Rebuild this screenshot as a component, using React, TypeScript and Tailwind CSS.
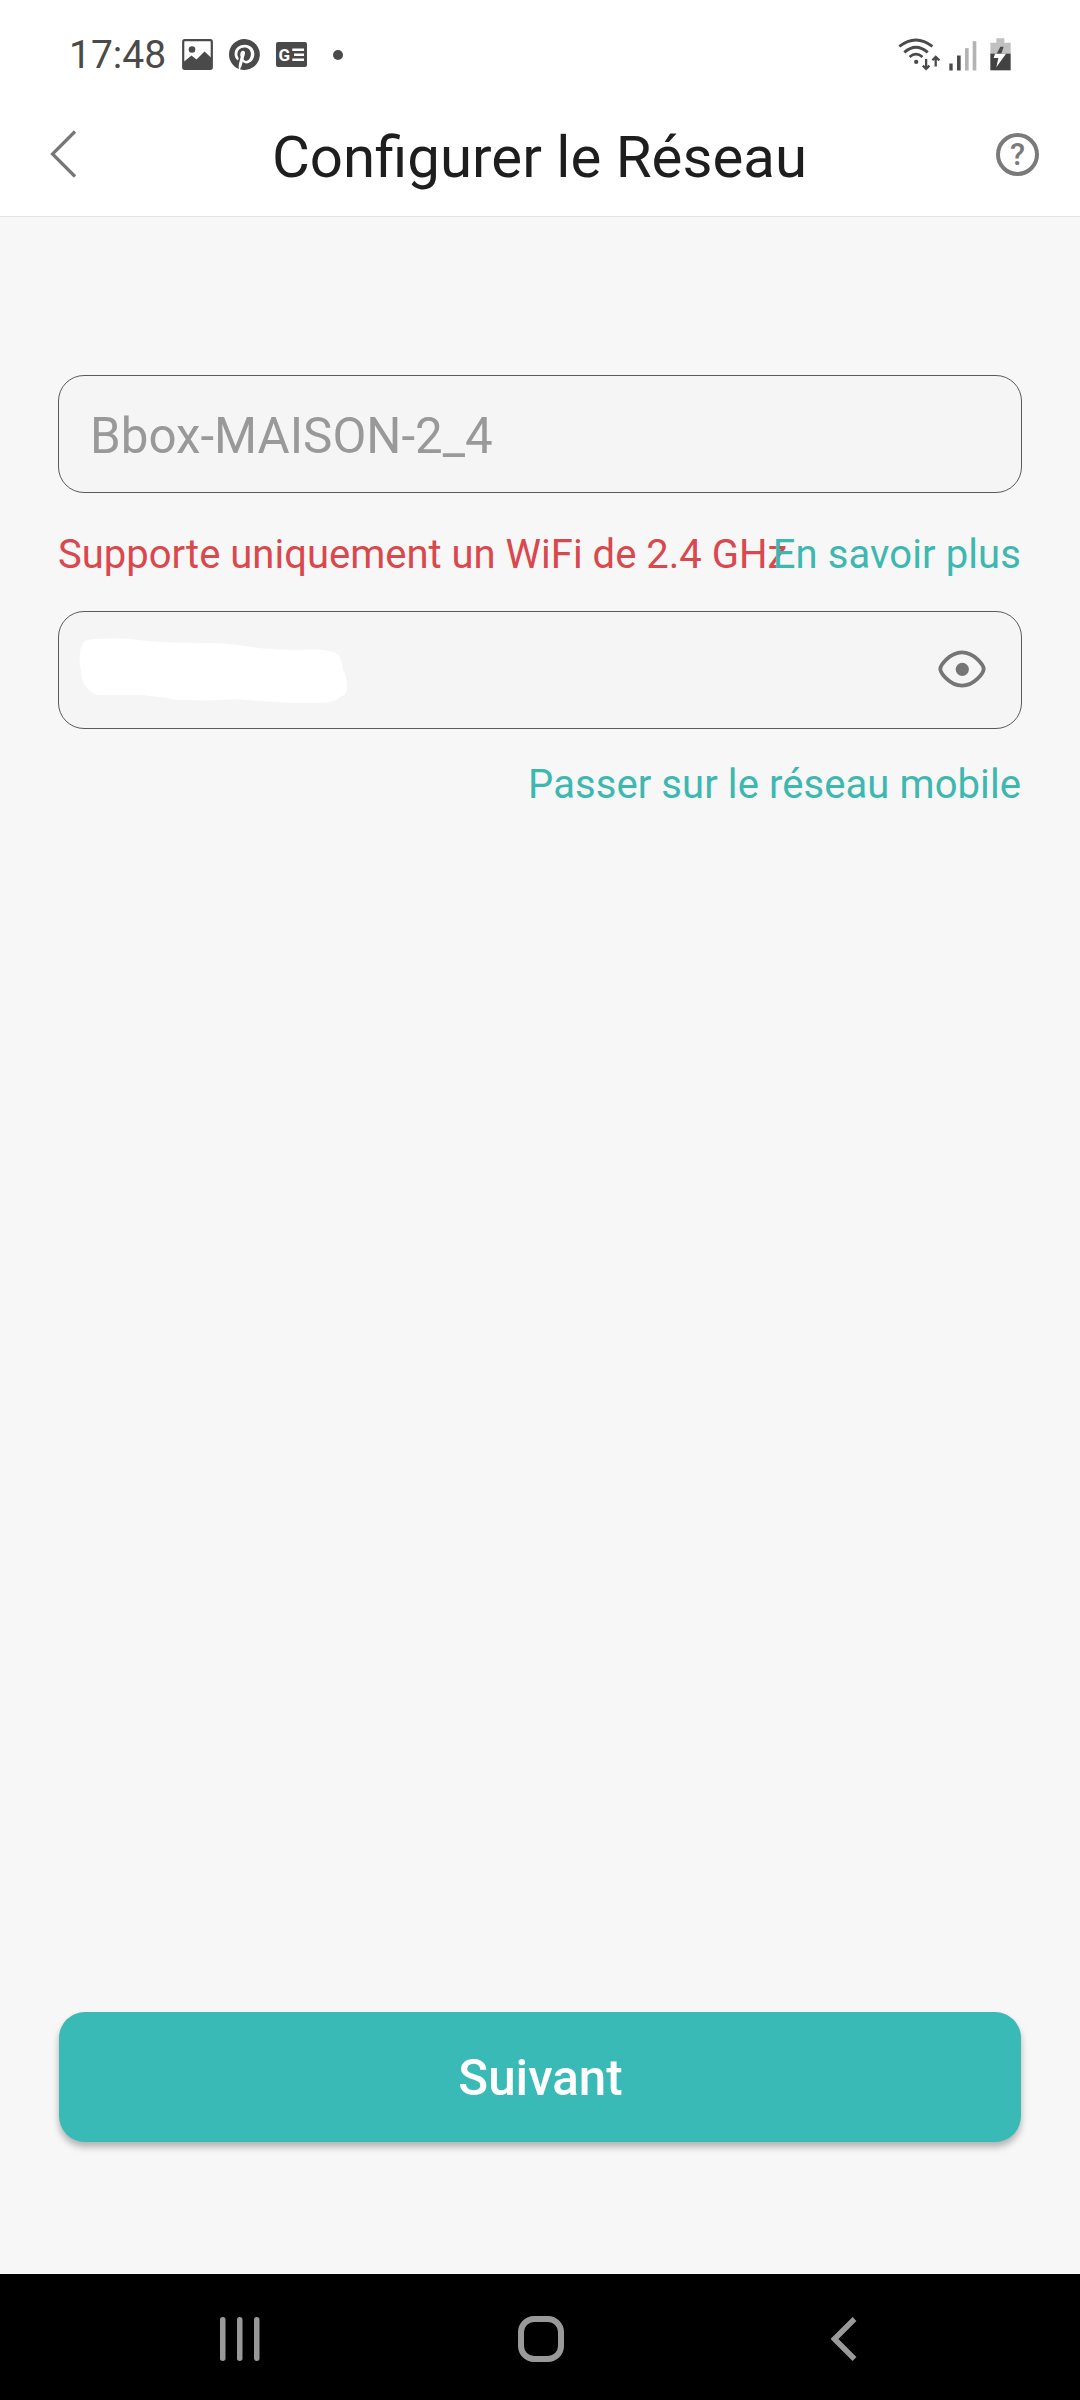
import type { ReactNode } from 'react'

type IconProps = { className?: string }

function PictureIcon({ className }: IconProps) {
  return (
    <svg viewBox="0 0 31 31" className={className} fill="none">
      <rect x="1.2" y="1.2" width="28.6" height="28.6" rx="1.6" stroke="currentColor" strokeWidth="2.2" />
      <circle cx="10" cy="10.5" r="3.3" fill="currentColor" />
      <path d="M1.5 23 9.500 16.500l5 4 8-8 7 6.500V29.500H1.500z" fill="currentColor" />
    </svg>
  )
}

function PinterestIcon({ className }: IconProps) {
  return (
    <svg viewBox="0 0 24 24" className={className} fill="currentColor">
      <path d="M12 0C5.370 0 0 5.370 0 12c0 5.080 3.160 9.420 7.630 11.170-.1-.95-.2-2.400.04-3.440.22-.94 1.400-5.960 1.400-5.960s-.36-.72-.36-1.780c0-1.660.97-2.910 2.170-2.910 1.020 0 1.520.77 1.520 1.690 0 1.030-.66 2.570-.99 3.990-.28 1.190.6 2.170 1.770 2.170 2.130 0 3.760-2.250 3.760-5.490 0-2.860-2.060-4.870-5.010-4.870-3.410 0-5.410 2.560-5.410 5.200 0 1.030.39 2.140.89 2.740.1.12.11.22.08.35-.09.37-.29 1.190-.33 1.360-.05.220-.17.260-.4.160-1.490-.69-2.430-2.880-2.430-4.630 0-3.770 2.740-7.240 7.910-7.240 4.150 0 7.380 2.960 7.380 6.920 0 4.120-2.600 7.450-6.210 7.450-1.210 0-2.350-.63-2.750-1.380l-.74 2.850c-.27 1.040-1 2.350-1.490 3.150A12 12 0 1 0 12 0z" />
    </svg>
  )
}

function NewsIcon({ className }: IconProps) {
  return (
    <svg viewBox="0 0 31 25" className={className}>
      <rect width="31" height="25" rx="2" fill="currentColor" />
      <text x="2.600" y="18.700" fontSize="17" fontWeight="700" fontFamily="Roboto, sans-serif" fill="#fff">
        G
      </text>
      <path d="M16.300 7.700H28M18 12.700h10M16.300 17.700H28" stroke="#fff" strokeWidth="2.500" />
    </svg>
  )
}

function WifiIcon({ className }: IconProps) {
  return (
    <svg viewBox="54 45 130 105" className={className} fill="none" stroke="currentColor">
      <path d="M58 76Q108 37 158 76" strokeWidth="8.500" />
      <path d="M73 94Q108 63 144 94" strokeWidth="8.500" />
      <path d="M89 108Q108 91 128 108" strokeWidth="8.500" />
      <circle cx="109" cy="123" r="6.500" fill="currentColor" stroke="none" />
      <path d="M139 114v29M129 134l10 10 10-10M168 137v-29M158 118l10-10 11 10" strokeWidth="7" />
    </svg>
  )
}

function SignalIcon({ className }: IconProps) {
  return (
    <svg viewBox="206 57 84 92" className={className}>
      <rect x="207" y="127" width="10" height="21" fill="#4a4a4a" />
      <rect x="230" y="103" width="11" height="45" fill="#4a4a4a" />
      <rect x="254" y="81" width="11" height="67" fill="#b3b3b3" />
      <rect x="277" y="60" width="11" height="88" fill="#b3b3b3" />
    </svg>
  )
}

function BatteryIcon({ className }: IconProps) {
  return (
    <svg viewBox="330 52 63 97" className={className}>
      <path d="M349 52h24v13h19v34h-61V65h18z" fill="#c0c0c0" />
      <path d="M331 98h61v50h-61z" fill="#424242" />
      <path d="M361 77h10l-7 21h-14z" fill="#4a4a4a" />
      <path d="M345 98h33l-29 41 6-28h-14z" fill="#fff" />
    </svg>
  )
}

function EyeIcon({ className }: IconProps) {
  return (
    <svg viewBox="0 0 48 38" className={className} fill="none">
      <path
        d="M2.300 19C2.300 15.500 11.500 2.300 24 2.300S45.700 15.500 45.700 19 36.500 35.700 24 35.700 2.300 22.500 2.300 19z"
        stroke="#757575"
        strokeWidth="3.800"
      />
      <circle cx="24.300" cy="19.300" r="6.600" fill="#757575" />
    </svg>
  )
}

// white marker stroke hiding the password
function Scribble({ className }: IconProps) {
  return (
    <svg viewBox="110 140 820 205" className={className}>
      <path
        d="M138 152Q200 143 270 149Q320 156 370 159Q450 160 540 162Q620 170 670 178Q750 184 820 180Q885 183 898 198Q908 215 910 240Q923 260 922 295Q924 316 905 322Q885 342 850 341H750Q660 337 590 331Q500 337 410 332Q350 322 300 318H170Q150 312 136 294Q122 280 120 240Q112 205 120 180Q124 158 138 152z"
        fill="#fff"
      />
    </svg>
  )
}

function StatusBar() {
  return (
    <div className="flex h-[92px] items-center justify-between pt-[17px] pr-[69px] pl-[69px] text-[#4a4a4a]">
      <div className="flex items-center">
        <span className="w-[113px] pt-[2px] text-[39px] leading-none">17:48</span>
        <PictureIcon className="size-[31px]" />
        <PinterestIcon className="ml-4 size-[31px]" />
        <NewsIcon className="ml-4 h-[25px] w-[31px]" />
        <span className="ml-[26px] size-[10px] rounded-full bg-[#4a4a4a]" />
      </div>
      <div className="flex items-end pb-[2px]">
        <WifiIcon className="h-[35px] w-[43px]" />
        <SignalIcon className="ml-[8px] h-[31px] w-[28px]" />
        <BatteryIcon className="ml-[13px] h-[33px] w-[21px]" />
      </div>
    </div>
  )
}

function Header() {
  return (
    <header className="grid h-[125px] grid-cols-[1fr_auto_1fr] items-center border-b border-[#e4e4e4] pr-[41px] pl-[50px]">
      <button aria-label="Retour">
        <svg viewBox="0 0 27 48" className="h-[48px] w-[27px]" fill="none">
          <path d="M25 1.500 2.500 24 25 46.500" stroke="#777" strokeWidth="3.200" />
        </svg>
      </button>
      <h1 className="pt-[6px] pr-[10px] text-[58.200px] leading-none text-[#1e1e1e]">Configurer le Réseau</h1>
      <button
        aria-label="Aide"
        className="flex size-[43px] items-center justify-center justify-self-end rounded-full border-4 border-[#7a7a7a] pt-px text-[31px] leading-none font-medium text-[#7a7a7a]"
      >
        ?
      </button>
    </header>
  )
}

function Field({ children }: { children: ReactNode }) {
  return (
    <div className="flex h-[118px] items-center rounded-[26px] border border-[#5a5a5a] bg-[#f5f5f5]">
      {children}
    </div>
  )
}

function NavBar() {
  return (
    <nav className="flex h-[126px] items-center justify-between bg-black pt-[3px] pr-[222px] pl-[219px]">
      <svg viewBox="0 0 42 46" className="h-[46px] w-[42px]" fill="#999">
        <rect x="1" y="1" width="5.500" height="44" rx="2.700" />
        <rect x="18" y="1" width="5.500" height="44" rx="2.700" />
        <rect x="35" y="1" width="5.500" height="44" rx="2.700" />
      </svg>
      <span className="mr-[10px] size-[46px] rounded-[16px] border-[6px] border-[#999]" />
      <svg viewBox="0 0 27 46" className="h-[46px] w-[27px]" fill="none">
        <path d="M23.500 3 3.500 23l20 20" stroke="#999" strokeWidth="5.500" />
      </svg>
    </nav>
  )
}

export default function App() {
  return (
    <div className="flex h-[2400px] w-[1080px] flex-col bg-[#f7f7f7] font-[Roboto,sans-serif]">
      <div className="bg-white">
        <StatusBar />
        <Header />
      </div>

      <main className="flex flex-1 flex-col px-[58px] pt-[158px] pb-[132px]">
        <Field>
          <span className="pt-[6px] pl-[31px] text-[49.300px] leading-none text-[#999]">Bbox-MAISON-2_4</span>
        </Field>

        {/* the hint is too long for the row and runs under the link */}
        <div className="flex h-[118px] items-center justify-between pt-[6px] pr-px text-[40px] leading-none whitespace-nowrap">
          <span className="w-0 text-[#d9484c]">Supporte uniquement un WiFi de 2.4 GHz</span>
          <a className="relative tracking-[0.1px] text-[#3db8b0]">En savoir plus</a>
        </div>

        <Field>
          <Scribble className="ml-[18px] h-[68px] w-[273px]" />
          <button aria-label="Afficher le mot de passe" className="mr-[35px] mb-[2px] ml-auto">
            <EyeIcon className="h-[38px] w-[48px]" />
          </button>
        </Field>

        <div className="flex h-[111px] items-center justify-end pt-px pr-px text-[40px] leading-none tracking-[0.080px] text-[#3db8b0]">
          <a>Passer sur le réseau mobile</a>
        </div>

        <button className="mx-px mt-auto h-[130px] rounded-[26px] bg-[#39bab7] pt-[3px] pl-px text-[49.300px] leading-none font-medium text-white shadow-[0_5px_7px_rgba(0,0,0,0.28)]">
          Suivant
        </button>
      </main>

      <NavBar />
    </div>
  )
}
